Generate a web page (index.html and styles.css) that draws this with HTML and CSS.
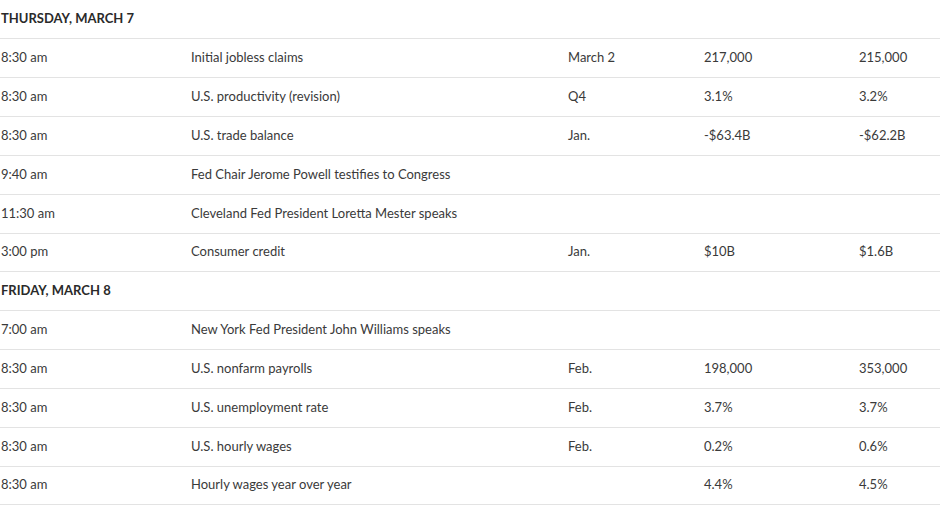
FILE: index.html
```html
<!DOCTYPE html>
<html>
<head>
<meta charset="utf-8">
<link rel="stylesheet" href="styles.css">
</head>
<body>
<div class="cal">
  <div class="day first">THURSDAY, MARCH 7</div>
  <div class="row"><span>8:30 am</span><span>Initial jobless claims</span><span>March 2</span><span>217,000</span><span>215,000</span></div>
  <div class="row"><span>8:30 am</span><span>U.S. productivity (revision)</span><span>Q4</span><span>3.1%</span><span>3.2%</span></div>
  <div class="row"><span>8:30 am</span><span>U.S. trade balance</span><span>Jan.</span><span>-$63.4B</span><span>-$62.2B</span></div>
  <div class="row"><span>9:40 am</span><span>Fed Chair Jerome Powell testifies to Congress</span><span></span><span></span><span></span></div>
  <div class="row"><span>11:30 am</span><span>Cleveland Fed President Loretta Mester speaks</span><span></span><span></span><span></span></div>
  <div class="row"><span>3:00 pm</span><span>Consumer credit</span><span>Jan.</span><span>$10B</span><span>$1.6B</span></div>
  <div class="day">FRIDAY, MARCH 8</div>
  <div class="row"><span>7:00 am</span><span>New York Fed President John Williams speaks</span><span></span><span></span><span></span></div>
  <div class="row"><span>8:30 am</span><span>U.S. nonfarm payrolls</span><span>Feb.</span><span>198,000</span><span>353,000</span></div>
  <div class="row"><span>8:30 am</span><span>U.S. unemployment rate</span><span>Feb.</span><span>3.7%</span><span>3.7%</span></div>
  <div class="row"><span>8:30 am</span><span>U.S. hourly wages</span><span>Feb.</span><span>0.2%</span><span>0.6%</span></div>
  <div class="row last"><span>8:30 am</span><span>Hourly wages year over year</span><span></span><span>4.4%</span><span>4.5%</span></div>
</div>
</body>
</html>
```

FILE: styles.css
```css
html, body {
  margin: 0;
  padding: 0;
  background: #ffffff;
}
body {
  font-family: Lato, "Liberation Sans", sans-serif;
  font-size: 13px;
  color: #3a3a3a;
}
.cal {
  width: 940px;
}
.day, .row {
  box-sizing: border-box;
  height: 38.92px;
  border-top: 1px solid #e3e3e3;
  padding-left: 1px;
  padding-bottom: 2px;
  display: flex;
  align-items: center;
}
.day {
  font-weight: 700;
  color: #2a2a2a;
}
.day.first {
  border-top: none;
  height: 38px;
}
.row {
  display: grid;
  grid-template-columns: 190px 377px 136px 155px 1fr;
}
.row.last {
  border-bottom: 1px solid #e3e3e3;
}
```
